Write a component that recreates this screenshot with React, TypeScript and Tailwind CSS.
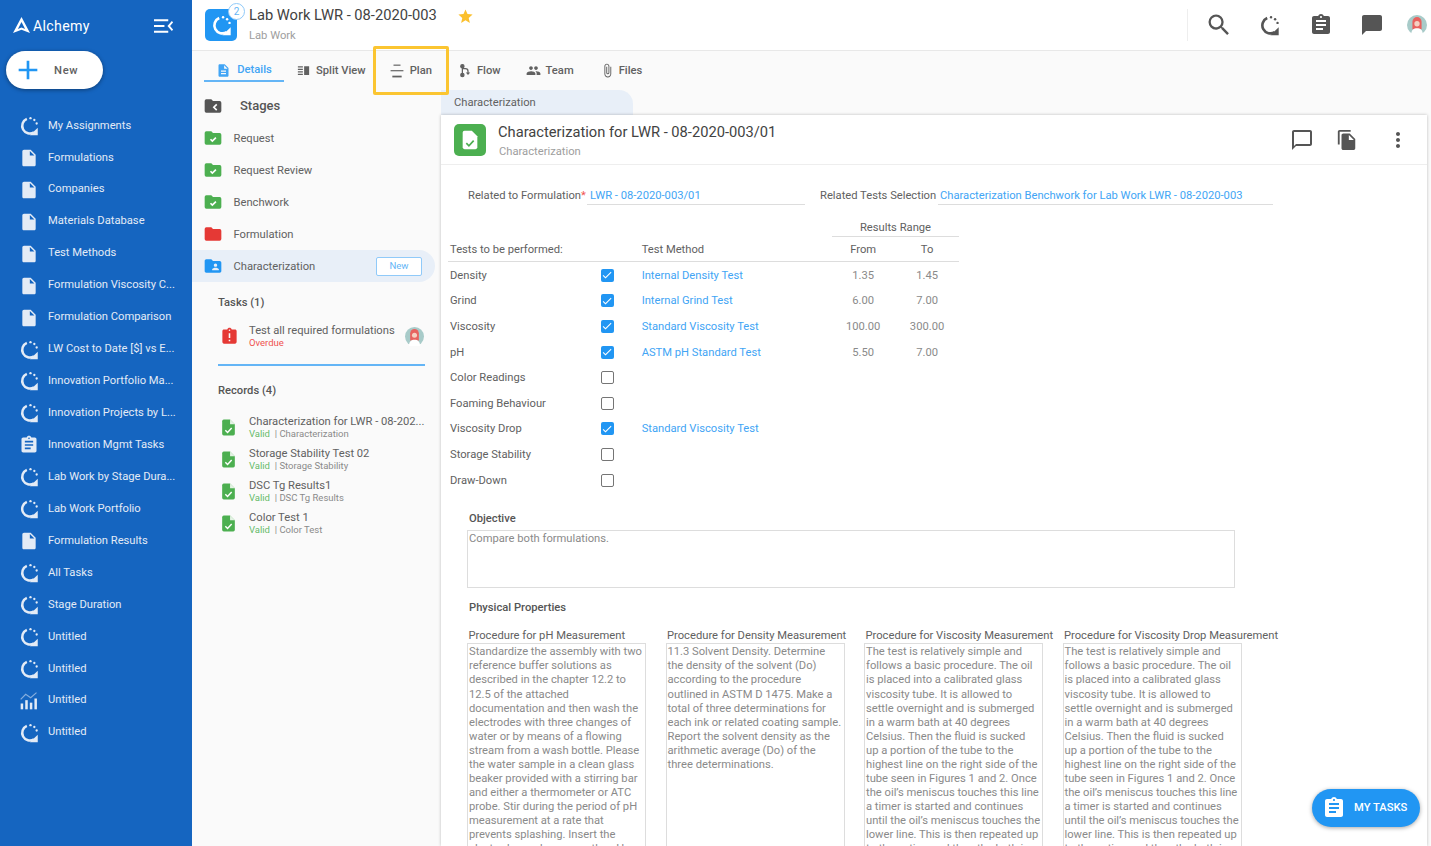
import type { ReactNode } from 'react'
import {
  MdAdd,
  MdAssignment,
  MdAssignmentLate,
  MdAttachFile,
  MdChatBubble,
  MdChatBubbleOutline,
  MdCheck,
  MdFileCopy,
  MdFolderShared,
  MdInsertDriveFile,
  MdMoreVert,
  MdPeople,
  MdSearch,
  MdStar,
  MdVerticalSplit,
  MdDescription,
} from 'react-icons/md'

const LoopIcon = ({ className }: { className?: string }) => (
  <svg viewBox="0 0 24 24" className={className} fill="none">
    <path d="M18 19.6A9.2 9.2 0 1 1 9.4 3.4" stroke="currentColor" strokeWidth="3" />
    <circle cx="13.8" cy="2.6" r="1.4" fill="currentColor" />
    <circle cx="18.4" cy="4.8" r="1.4" fill="currentColor" />
    <circle cx="21.2" cy="9" r="1.4" fill="currentColor" />
    <path d="M13 23h9.5v-9z" fill="currentColor" />
  </svg>
)

const ChartIcon = ({ className }: { className?: string }) => (
  <svg viewBox="0 0 24 24" className={className} fill="currentColor">
    <rect x="2" y="15" width="3" height="7" />
    <rect x="7.5" y="11" width="3" height="11" />
    <rect x="13" y="14" width="3" height="8" />
    <rect x="18.5" y="9" width="3" height="13" />
    <path d="M2 10l6-6 6 4 7-6" fill="none" stroke="currentColor" strokeWidth="1.4" opacity="0.55" />
  </svg>
)

const PlanIcon = ({ className }: { className?: string }) => (
  <svg viewBox="0 0 24 24" className={className} fill="currentColor">
    <rect x="6" y="1" width="12" height="2" />
    <rect x="1" y="10.5" width="22" height="2" />
    <rect x="4" y="20" width="16" height="3" />
  </svg>
)

const FlowIcon = ({ className }: { className?: string }) => (
  <svg viewBox="0 0 24 24" className={className} fill="none" stroke="currentColor" strokeWidth="2">
    <path d="M7 5v14M7 9h5a4 4 0 0 1 4 4v4" />
    <circle cx="7" cy="5" r="2.6" fill="currentColor" />
    <circle cx="7" cy="19" r="2.6" fill="currentColor" />
    <path d="M12.5 15l3.5 4 3.5-4z" fill="currentColor" stroke="none" />
  </svg>
)

const FolderMark = ({ color, children }: { color: string; children?: ReactNode }) => (
  <svg viewBox="0 0 24 24" className={`size-[20px] shrink-0 ${color}`}>
    <path d="M10 4H4a2 2 0 0 0-2 2v12a2 2 0 0 0 2 2h16a2 2 0 0 0 2-2V8a2 2 0 0 0-2-2h-8z" fill="currentColor" />
    {children}
  </svg>
)

const CheckFolder = () => (
  <FolderMark color="text-[#4caf50]">
    <path d="M9 13.5l2.2 2.2L15.5 11.5" fill="none" stroke="#fff" strokeWidth="2" />
  </FolderMark>
)

const BackFolder = () => (
  <FolderMark color="text-[#555555]">
    <path d="M16.5 10l-3.5 3.5 3.5 3.5" fill="none" stroke="#fff" strokeWidth="2" />
  </FolderMark>
)

const CheckDoc = ({ className }: { className?: string }) => (
  <svg viewBox="0 0 24 24" className={className}>
    <path d="M14 2H6a2 2 0 0 0-2 2v16a2 2 0 0 0 2 2h12a2 2 0 0 0 2-2V8z" fill="currentColor" />
    <path d="M14 2v6h6" fill="#fff" opacity="0.85" />
    <path d="M8 15.5l2.8 2.8 5.2-5.6" fill="none" stroke="#fff" strokeWidth="1.8" />
  </svg>
)

const Avatar = ({ className }: { className?: string }) => (
  <svg viewBox="0 0 24 24" className={className}>
    <circle cx="12" cy="12" r="12" fill="#a8cbc9" />
    <path d="M6.5 8a5.5 5.5 0 0 1 11 0v9h-11z" fill="#e8625f" />
    <circle cx="12" cy="10.5" r="3.2" fill="#f6d0c2" />
    <path d="M5 24c0-6 3-8 7-8s7 2 7 8z" fill="#fff" />
  </svg>
)

const navItems: { label: string; icon: 'loop' | 'doc' | 'task' | 'chart' }[] = [
  { label: 'My Assignments', icon: 'loop' },
  { label: 'Formulations', icon: 'doc' },
  { label: 'Companies', icon: 'doc' },
  { label: 'Materials Database', icon: 'doc' },
  { label: 'Test Methods', icon: 'doc' },
  { label: 'Formulation Viscosity C...', icon: 'doc' },
  { label: 'Formulation Comparison', icon: 'doc' },
  { label: 'LW Cost to Date [$] vs E...', icon: 'loop' },
  { label: 'Innovation Portfolio Ma...', icon: 'loop' },
  { label: 'Innovation Projects by L...', icon: 'loop' },
  { label: 'Innovation Mgmt Tasks', icon: 'task' },
  { label: 'Lab Work by Stage Dura...', icon: 'loop' },
  { label: 'Lab Work Portfolio', icon: 'loop' },
  { label: 'Formulation Results', icon: 'doc' },
  { label: 'All Tasks', icon: 'loop' },
  { label: 'Stage Duration', icon: 'loop' },
  { label: 'Untitled', icon: 'loop' },
  { label: 'Untitled', icon: 'loop' },
  { label: 'Untitled', icon: 'chart' },
  { label: 'Untitled', icon: 'loop' },
]

const NavIcon = ({ icon }: { icon: string }) => {
  if (icon === 'doc') return <MdInsertDriveFile className="size-[20px] shrink-0" />
  if (icon === 'task') return <MdAssignment className="size-[20px] shrink-0" />
  if (icon === 'chart') return <ChartIcon className="size-[20px] shrink-0" />
  return <LoopIcon className="size-[20px] shrink-0" />
}

const Sidebar = () => (
  <aside className="flex w-[192px] shrink-0 flex-col bg-[#1565c0]">
    <div className="flex h-[51px] items-center pl-[13px] pr-[19px]">
      <svg viewBox="0 0 18 18" className="size-[17px] text-white" fill="currentColor">
        <path fillRule="evenodd" d="M9 0l9 17-9-3.6L0 17zM9 5.4L5.2 12.6 9 11l3.8 1.6z" />
      </svg>
      <span className="ml-[3px] mt-[2px] text-[14.2px] tracking-[0.3px] text-white">Alchemy</span>
      <svg viewBox="0 0 20 14" className="ml-auto h-[14px] w-[19px] text-white" fill="none" stroke="currentColor" strokeWidth="2">
        <path d="M0 1h15M0 7h11M0 13h15M19.5 2.5L15.5 7l4 4.5" />
      </svg>
    </div>
    <button className="ml-[6px] flex h-[38px] w-[97px] items-center rounded-full bg-white pl-[6px] shadow-[0_1px_4px_rgba(0,0,0,0.4)]">
      <MdAdd className="size-[32px] text-[#2196f3]" />
      <span className="ml-[10px] mt-[2px] text-[11.2px] font-medium tracking-[0.7px] text-[#616161]">New</span>
    </button>
    <nav className="mt-[21px] flex flex-col">
      {navItems.map((item, i) => (
        <div key={i} className="flex h-[31.95px] items-center pl-[19px] text-[#e3ebf6]">
          <NavIcon icon={item.icon} />
          <span className="ml-[9px] whitespace-nowrap text-[11.2px]">{item.label}</span>
        </div>
      ))}
    </nav>
  </aside>
)

const Header = () => (
  <header className="flex h-[51px] shrink-0 items-center border-b border-[#e8e8e8] bg-white pl-[13px]">
    <div className="relative flex size-[32px] items-center justify-center rounded-[5px] bg-[#2196f3] text-white">
      <LoopIcon className="size-[21px]" />
      <span className="absolute -right-[8px] -top-[6px] flex size-[17px] items-center justify-center rounded-full border border-[#90caf9] bg-white text-[10px] text-[#64b5f6]">
        2
      </span>
    </div>
    <div className="ml-[12px] flex flex-col">
      <span className="-mt-[2px] text-[14.7px] leading-[18px] text-[#424242]">Lab Work LWR - 08-2020-003</span>
      <span className="mt-[5px] text-[11.2px] leading-[14px] text-[#9e9e9e]">Lab Work</span>
    </div>
    <MdStar className="mb-[17px] ml-[20px] size-[17px] text-[#fbc02d]" />
    <div className="ml-auto flex h-full items-center">
      <div className="h-[32px] w-px bg-[#eeeeee]" />
      <MdSearch className="ml-[17px] size-[28px] text-[#555555]" />
      <LoopIcon className="ml-[26px] size-[21px] text-[#555555]" />
      <MdAssignment className="ml-[29px] size-[24px] text-[#555555]" />
      <MdChatBubble className="ml-[27px] size-[24px] text-[#555555]" />
      <Avatar className="ml-[23px] mr-[4px] size-[20px]" />
    </div>
  </header>
)

const Tabs = () => (
  <div className="relative flex h-[39px] shrink-0 items-center pl-[12px] text-[11.2px] font-medium text-[#616161]">
    <div className="flex h-[31px] w-[80px] items-center justify-center gap-[6px] self-start border-b-2 border-[#64b5f6] pt-[10px] text-[#42a5f5]">
      <MdDescription className="size-[15px]" />
      <span>Details</span>
    </div>
    <div className="ml-[12px] mt-[1px] flex items-center gap-[5px]">
      <MdVerticalSplit className="size-[15px]" />
      <span>Split View</span>
    </div>
    <div className="ml-[24px] mt-[1px] flex items-center gap-[6px]">
      <PlanIcon className="size-[14px]" />
      <span>Plan</span>
    </div>
    <div className="ml-[26px] mt-[1px] flex items-center gap-[4px]">
      <FlowIcon className="size-[15px]" />
      <span>Flow</span>
    </div>
    <div className="ml-[25px] mt-[1px] flex items-center gap-[5px]">
      <MdPeople className="size-[15px]" />
      <span>Team</span>
    </div>
    <div className="ml-[26px] mt-[1px] flex items-center gap-[4px]">
      <MdAttachFile className="size-[15px]" />
      <span>Files</span>
    </div>
    <div className="absolute left-[181px] top-[-5px] h-[49px] w-[76px] rounded-[2px] border-[3px] border-[#fbc531]" />
  </div>
)

const stages = [
  { label: 'Request', done: true },
  { label: 'Request Review', done: true },
  { label: 'Benchwork', done: true },
]

const records = [
  { title: 'Characterization for LWR - 08-202...', sub: 'Characterization' },
  { title: 'Storage Stability Test 02', sub: 'Storage Stability' },
  { title: 'DSC Tg Results1', sub: 'DSC Tg Results' },
  { title: 'Color Test 1', sub: 'Color Test' },
]

const StagesPanel = () => (
  <div className="w-[249px] shrink-0 text-[#616161]">
    <div className="flex h-[32px] items-center pl-[11px]">
      <BackFolder />
      <span className="ml-[17px] text-[13px] font-medium text-[#555555]">Stages</span>
    </div>
    {stages.map((s) => (
      <div key={s.label} className="flex h-[32px] items-center pl-[11px]">
        <CheckFolder />
        <span className="ml-[10.5px] mt-[2px] text-[11.2px]">{s.label}</span>
      </div>
    ))}
    <div className="flex h-[32px] items-center pl-[11px]">
      <FolderMark color="text-[#e53935]" />
      <span className="ml-[10.5px] mt-[2px] text-[11.2px]">Formulation</span>
    </div>
    <div className="flex h-[32px] w-[243px] items-center rounded-r-full bg-[#e8eff8] pl-[11px]">
      <MdFolderShared className="size-[20px] text-[#2196f3]" />
      <span className="ml-[10.5px] mt-[2px] text-[11.2px]">Characterization</span>
      <span className="ml-auto mr-[13px] flex h-[19px] w-[46px] items-center justify-center rounded-[2px] border border-[#90caf9] bg-white text-[9.6px] text-[#64b5f6]">
        New
      </span>
    </div>
    <div className="ml-[26px] mt-[13px] w-[207px] border-b-2 border-[#64b5f6] pb-[16px]">
      <div className="text-[11.2px] font-medium leading-[16px] text-[#555555]">Tasks (1)</div>
      <div className="mt-[13px] flex items-center">
        <MdAssignmentLate className="ml-[2px] size-[19px] shrink-0 text-[#e53935]" />
        <div className="ml-[10px] flex flex-1 flex-col">
          <span className="text-[11.2px] leading-[13px]">Test all required formulations</span>
          <span className="text-[9.5px] leading-[11px] text-[#ef5350]">Overdue</span>
        </div>
        <Avatar className="mr-[1px] size-[19px] shrink-0" />
      </div>
    </div>
    <div className="ml-[26px] mt-[17px] text-[11.2px] font-medium leading-[16px] text-[#555555]">Records (4)</div>
    <div className="ml-[26px] mt-[16px] flex flex-col gap-[6px]">
      {records.map((r) => (
        <div key={r.title} className="flex h-[26px] items-center">
          <CheckDoc className="ml-[1px] -mt-[1px] size-[19px] shrink-0 text-[#4caf50]" />
          <div className="ml-[11px] flex flex-col">
            <span className="whitespace-nowrap text-[11.2px] leading-[12px]">{r.title}</span>
            <span className="text-[9.5px] leading-[12px] text-[#8a8a8a]">
              <span className="text-[#66bb6a]">Valid</span> &nbsp;| {r.sub}
            </span>
          </div>
        </div>
      ))}
    </div>
  </div>
)

const tests = [
  { name: 'Density', checked: true, method: 'Internal Density Test', from: '1.35', to: '1.45' },
  { name: 'Grind', checked: true, method: 'Internal Grind Test', from: '6.00', to: '7.00' },
  { name: 'Viscosity', checked: true, method: 'Standard Viscosity Test', from: '100.00', to: '300.00' },
  { name: 'pH', checked: true, method: 'ASTM pH Standard Test', from: '5.50', to: '7.00' },
  { name: 'Color Readings', checked: false },
  { name: 'Foaming Behaviour', checked: false },
  { name: 'Viscosity Drop', checked: true, method: 'Standard Viscosity Test' },
  { name: 'Storage Stability', checked: false },
  { name: 'Draw-Down', checked: false },
]

const Checkbox = ({ checked }: { checked: boolean }) =>
  checked ? (
    <span className="-mt-[2px] flex size-[13px] items-center justify-center rounded-[2px] bg-[#2196f3] text-white">
      <MdCheck className="size-[12px]" />
    </span>
  ) : (
    <span className="-mt-[2px] size-[13px] rounded-[2px] border-[1.5px] border-[#757575]" />
  )

const TestsTable = () => (
  <div className="ml-[7px] w-[511px] text-[11.2px] text-[#616161]">
    <div className="ml-[384px] flex h-[20px] w-[127px] items-center justify-center border-b border-[#dddddd] pt-[3px] text-[#616161]">
      Results Range
    </div>
    <div className="flex h-[25px] items-center border-b border-[#dddddd] pl-[2px] pt-[2px]">
      <span className="w-[192px]">Tests to be performed:</span>
      <span className="w-[190px]">Test Method</span>
      <span className="w-[64px] text-center">From</span>
      <span className="w-[64px] text-center">To</span>
    </div>
    <div className="pt-[1px]">
      {tests.map((t) => (
        <div key={t.name} className="flex h-[25.6px] items-center pl-[2px] pt-[1px]">
          <span className="w-[151px]">{t.name}</span>
          <span className="flex w-[41px]">
            <Checkbox checked={t.checked} />
          </span>
          <span className="w-[190px] text-[#42a5f5]">{t.method}</span>
          <span className="w-[64px] text-center text-[#8a8a8a]">{t.from}</span>
          <span className="w-[64px] text-center text-[#8a8a8a]">{t.to}</span>
        </div>
      ))}
    </div>
  </div>
)

const procedures = [
  {
    title: 'Procedure for pH Measurement',
    lines: [
      'Standardize the assembly with two',
      'reference buffer solutions as',
      'described in the chapter 12.2 to',
      '12.5 of the attached',
      'documentation and then wash the',
      'electrodes with three changes of',
      'water or by means of a flowing',
      'stream from a wash bottle. Please',
      'the water sample in a clean glass',
      'beaker provided with a stirring bar',
      'and either a thermometer or ATC',
      'probe. Stir during the period of pH',
      'measurement at a rate that',
      'prevents splashing. Insert the',
      'electrodes and measure the pH',
    ],
  },
  {
    title: 'Procedure for Density Measurement',
    lines: [
      '11.3 Solvent Density. Determine',
      'the density of the solvent (Do)',
      'according to the procedure',
      'outlined in ASTM D 1475. Make a',
      'total of three determinations for',
      'each ink or related coating sample.',
      'Report the solvent density as the',
      'arithmetic average (Do) of the',
      'three determinations.',
    ],
  },
  { title: 'Procedure for Viscosity Measurement', lines: [] as string[] },
  { title: 'Procedure for Viscosity Drop Measurement', lines: [] as string[] },
]

const viscosityLines = [
  'The test is relatively simple and',
  'follows a basic procedure. The oil',
  'is placed into a calibrated glass',
  'viscosity tube. It is allowed to',
  'settle overnight and is submerged',
  'in a warm bath at 40 degrees',
  'Celsius. Then the fluid is sucked',
  'up a portion of the tube to the',
  'highest line on the right side of the',
  'tube seen in Figures 1 and 2. Once',
  'the oil’s meniscus touches this line',
  'a timer is started and continues',
  'until the oil’s meniscus touches the',
  'lower line. This is then repeated up',
  'to the action and then the bath is',
]

const RecordCard = () => (
  <div className="flex-1 overflow-hidden bg-white shadow-[0_0_3px_rgba(0,0,0,0.25)]">
    <div className="flex h-[50px] items-center border-b border-[#eeeeee] pl-[13px]">
      <div className="flex size-[32px] items-center justify-center rounded-[5px] bg-[#4caf50]">
        <svg viewBox="0 0 24 24" className="size-[22px]">
          <path d="M14 2H6a2 2 0 0 0-2 2v16a2 2 0 0 0 2 2h12a2 2 0 0 0 2-2V8z" fill="#fff" />
          <path d="M8 15.5l2.8 2.8 5.2-5.6" fill="none" stroke="#4caf50" strokeWidth="1.8" />
        </svg>
      </div>
      <div className="ml-[12px] flex flex-col pt-[2px]">
        <span className="text-[14.7px] leading-[18px] text-[#424242]">Characterization for LWR - 08-2020-003/01</span>
        <span className="ml-[1px] mt-[4px] text-[11.2px] leading-[14px] text-[#9e9e9e]">Characterization</span>
      </div>
      <div className="ml-auto flex items-center pr-[17px] text-[#555555]">
        <MdChatBubbleOutline className="size-[24px]" />
        <MdFileCopy className="ml-[22px] size-[22px]" />
        <MdMoreVert className="ml-[28px] size-[24px]" />
      </div>
    </div>
    <div className="mt-[22px] flex h-[18px] items-center text-[11.2px] text-[#616161]">
      <span className="ml-[27px] w-[119px] whitespace-nowrap">
        Related to Formulation<span className="text-[#ef5350]">*</span>
      </span>
      <span className="h-[18px] w-[218px] border-b border-[#dddddd] pl-[3px] leading-[18px] text-[#42a5f5]">
        LWR - 08-2020-003/01
      </span>
      <span className="ml-[15px] w-[118px] whitespace-nowrap">Related Tests Selection</span>
      <span className="h-[18px] w-[335px] whitespace-nowrap border-b border-[#dddddd] pl-[2px] leading-[18px] text-[#42a5f5]">
        Characterization Benchwork for Lab Work LWR - 08-2020-003
      </span>
    </div>
    <div className="mt-[12px]">
      <TestsTable />
    </div>
    <div className="ml-[28px] mt-[18px] text-[11.2px] font-medium leading-[16px] text-[#555555]">Objective</div>
    <div className="ml-[26px] mt-[3px] h-[58px] w-[768px] border border-[#dddddd] pl-[1px] pt-[1px] text-[11.2px] leading-[14px] text-[#8a8a8a]">
      Compare both formulations.
    </div>
    <div className="ml-[28px] mt-[12px] text-[11.2px] font-medium leading-[16px] text-[#555555]">Physical Properties</div>
    <div className="ml-[26px] mt-[12px] flex">
      {procedures.map((p, i) => (
        <div key={p.title} className="w-[198.5px] shrink-0">
          <div className="whitespace-nowrap pl-[1.5px] text-[11.2px] leading-[15px] text-[#616161]">{p.title}</div>
          <div className="h-[210px] w-[179px] border border-[#dddddd] pl-[1px] pt-[1px] text-[11.2px] leading-[14.07px] text-[#8a8a8a]">
            {(i < 2 ? p.lines : viscosityLines).map((l) => (
              <div key={l} className="whitespace-nowrap">
                {l}
              </div>
            ))}
          </div>
        </div>
      ))}
    </div>
  </div>
)

export default function App() {
  return (
    <div className="relative flex h-[846px] w-full overflow-hidden bg-[#fafafa] font-['Roboto',sans-serif]">
      <Sidebar />
      <div className="flex min-w-0 flex-1 flex-col">
        <Header />
        <Tabs />
        <div className="flex min-h-0 flex-1">
          <StagesPanel />
          <div className="mr-[4px] flex min-w-0 flex-1 flex-col">
            <div className="flex h-[25px] w-[192px] shrink-0 items-center rounded-tr-[14px] bg-[#e8eff8] pl-[13px] pt-[1px] text-[11.2px] text-[#616161]">
              Characterization
            </div>
            <RecordCard />
          </div>
        </div>
      </div>
      <button className="absolute left-[1312px] top-[789px] flex h-[38px] w-[108px] items-center rounded-full bg-[#2196f3] pl-[10px] shadow-[0_1px_4px_rgba(0,0,0,0.35)]">
        <MdAssignment className="size-[24px] text-white" />
        <span className="ml-[8px] mt-[1px] text-[11.2px] font-medium text-white">MY TASKS</span>
      </button>
    </div>
  )
}
